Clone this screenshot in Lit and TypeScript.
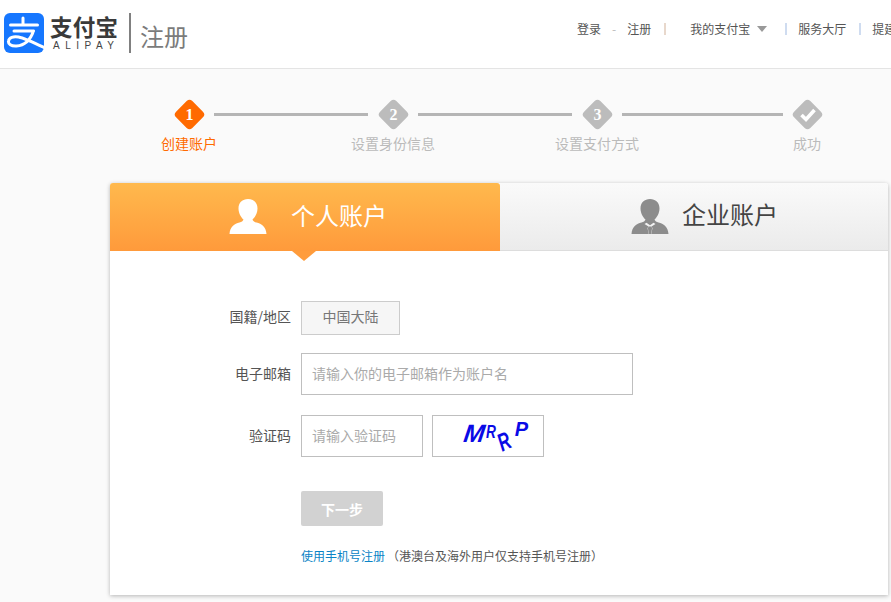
import { LitElement, html, css, svg } from "lit";
import { customElement } from "lit/decorators.js";

@customElement("app-root")
export class AppRoot extends LitElement {
  static styles = css`
    :host {
      display: block;
      width: 891px;
      height: 602px;
      overflow: hidden;
      background: #fafafa;
      font-family: "Noto Sans CJK SC", "Liberation Sans", sans-serif;
      color: #555;
    }
    .header {
      height: 68px;
      background: #fff;
      border-bottom: 1px solid #e4e4e4;
      display: flex;
      align-items: center;
      padding-left: 4px;
      white-space: nowrap;
    }
    .mark { width: 40px; height: 40px; flex: none; margin-top: -2px; }
    .wordmark { margin-left: 6px; width: 68px; display: flex; flex-direction: column; margin-top: -3px; }
    .wordmark b { font-size: 22.5px; line-height: 25px; color: #3a3a3a; font-weight: 700; letter-spacing: 0.2px; }
    .wordmark span {
      font-family: "Liberation Sans", sans-serif;
      font-size: 10px; line-height: 11px; letter-spacing: 5.5px; color: #444; margin: 1px 0 0 3px;
    }
    .vbar { width: 2px; height: 40px; background: #808080; margin-left: 11px; margin-top: -2px; flex: none; }
    .page-name { font-size: 24px; color: #7b7b7b; margin-left: 9px; line-height: 30px; margin-top: 4px; }
    .nav {
      margin-left: auto;
      width: 314px;
      flex: none;
      display: flex;
      align-items: center;
      font-size: 12px;
      color: #555;
      margin-top: -11px;
      overflow: hidden;
    }
    .nav .dash { color: #bbb; margin: 0 11px; width: 5px; text-align: center; }
    .nav .sep { width: 2px; height: 12px; flex: none; }
    .nav .sep.warm { background: #e8d8cc; margin: 0 24px 0 13px; }
    .nav .sep.cool { background: #cfdcf0; margin: 0 11px 0 13px; }
    .nav .sep.first { margin-left: 18px; }
    .caret {
      width: 0; height: 0; margin-left: 7px; flex: none;
      border-left: 5px solid transparent; border-right: 5px solid transparent; border-top: 6px solid #999;
    }
    .steps { padding: 31px 0 0 175px; height: 114px; box-sizing: border-box; }
    .track { display: flex; align-items: center; height: 29px; }
    .dia { width: 29px; height: 29px; flex: none; display: flex; align-items: center; justify-content: center; position: relative; }
    .dia::before {
      content: ""; position: absolute; left: 3px; top: 3px; width: 23px; height: 23px;
      background: #bcbcbc; border-radius: 4px; transform: rotate(45deg);
    }
    .dia.on::before { background: #ff6a00; }
    .dia span {
      position: relative; color: #fff; font: 700 16px/1 "Liberation Serif", serif;
    }
    .dia svg { position: relative; width: 18px; height: 16px; }
    .line { height: 3px; background: #b5b5b5; flex: none; }
    .line.a { width: 154px; margin: 0 11px 0 10px; }
    .line.b { width: 154px; margin: 0 11px 0 10px; }
    .line.c { width: 161px; margin: 0 10px; }
    .labels { display: flex; margin: 4px 0 0 -36px; font-size: 14px; line-height: 20px; color: #bbb; }
    .labels div { width: 100px; text-align: center; flex: none; }
    .labels .on { color: #ff6a00; }
    .labels .g1 { margin-left: 104px; }
    .labels .g2 { margin-left: 110px; }
    .card {
      margin-left: 110px;
      width: 778px;
      height: 412px;
      background: #fff;
      border-radius: 3px 3px 0 0;
      box-shadow: 0 1px 4px rgba(0,0,0,.28);
    }
    .tabs { display: flex; height: 68px; position: relative; }
    .tab { display: flex; align-items: center; font-size: 24px; box-sizing: border-box; }
    .tab svg { width: 38px; height: 36px; flex: none; }
    .tab span { margin-bottom: 6px; }
    .tab.me {
      width: 390px; padding-left: 119px; gap: 24px; color: #fff;
      background: linear-gradient(#ffb94d, #ff9a3b);
      border-radius: 3px 3px 0 0;
      position: relative;
    }
    .tab.me::after {
      content: ""; position: absolute; left: 182px; top: 68px; width: 0; height: 0;
      border-left: 12px solid transparent; border-right: 12px solid transparent; border-top: 10px solid #ff9c3c;
    }
    .tab.co {
      width: 388px; padding-left: 131px; gap: 13px; color: #444;
      background: linear-gradient(#fafafa, #ebebeb);
      border-bottom: 1px solid #ddd;
      border-radius: 0 3px 0 0;
    }
    .form { padding-top: 50px; }
    .row { display: flex; align-items: center; }
    .row + .row { margin-top: 18px; }
    .row.r3 { margin-top: 20px; }
    .lbl { width: 181px; text-align: right; margin-right: 10px; padding-bottom: 2px; font-size: 14px; color: #555; flex: none; }
    .lbl.top { padding-bottom: 4px; }
    .box {
      box-sizing: border-box; border: 1px solid #bfbfbf; background: #fff;
      height: 42px; display: flex; align-items: center; padding: 0 0 2px 10px;
      font-size: 14px; color: #aaa; flex: none;
    }
    .box.static { width: 99px; height: 34px; justify-content: center; padding: 0 0 4px; background: #f6f6f6; border-color: #ccc; color: #777; }
    .box.email { width: 332px; }
    .box.code { width: 122px; }
    .box.captcha { width: 112px; margin-left: 9px; padding: 0 0 0 31px; align-items: flex-start; overflow: hidden; }
    .captcha span {
      display: inline-block; color: #0a0ae6; font: italic 700 20px/1 "Liberation Sans", sans-serif;
    }
    .captcha .m { margin-top: 5px; font-size: 25px; transform: skewX(-8deg); }
    .captcha .r1 { margin: 6px 0 0 1px; font-size: 19px; transform: scaleX(.72); transform-origin: left top; }
    .captcha .r2 { margin: 13px 0 0 -5px; font-size: 25px; transform: rotate(-25deg) scaleX(.66); }
    .captcha .p { margin: 3px 0 0 2px; font-size: 20px; }
    .next {
      margin: 34px 0 0 191px; width: 82px; height: 35px; border-radius: 2px; background: #d2d2d2;
      color: #fff; font-size: 14px; font-weight: 700; display: flex; align-items: center; justify-content: center;
    }
    .foot { margin: 21px 0 0 191px; font-size: 12px; line-height: 18px; color: #555; white-space: nowrap; }
    .foot a { color: #0a84c6; text-decoration: none; margin-right: 2px; }
  `;

  private person() {
    return svg`<svg viewBox="0 0 38 36" aria-hidden="true">
      <path fill="#fff" d="M19 0c5.500 0 9.500 3.500 9.500 9.500 0 4.500-2.500 9-5 11 .5 1.500 2 2.500 4 3 5 1.200 9.500 4 10 11.500H.5c.5-7.500 5-10.300 10-11.500 2-.5 3.500-1.500 4-3-2.500-2-5-6.500-5-11C9.500 3.500 13.500 0 19 0z"/>
    </svg>`;
  }

  private business() {
    return svg`<svg viewBox="0 0 38 36" aria-hidden="true">
      <path fill="#8c8c8c" d="M19 0c5.500 0 9.500 3.500 9.500 9.500 0 4.500-2.500 9-5 11 .5 1.500 2 2.500 4 3 5 1.200 9.500 4 10 11.500H.5c.5-7.500 5-10.300 10-11.500 2-.5 3.500-1.500 4-3-2.500-2-5-6.500-5-11C9.500 3.500 13.500 0 19 0z"/>
      <path fill="#f2f2f2" d="M13.500 25l4 2.500-1 1.500 1.200 6h2.600l1.200-6-1-1.500 4-2.500-2-1.200-3.500 2.500-3.500-2.500z"/>
      <path fill="#8c8c8c" d="M17.600 27.500h2.800l.7 1.500-.9 6h-2.400l-.9-6z"/>
    </svg>`;
  }

  render() {
    return html`
      <div class="header">
        <svg class="mark" viewBox="0 0 40 40" aria-hidden="true">
          <rect width="40" height="40" rx="6" fill="#1677ff"/>
          <path fill="none" stroke="#fff" stroke-width="3" stroke-linecap="round" d="M19 5v7M6.500 12h27M10 18h19.500M29.500 18c-3 8.500-9 14.500-17 15-5.500.300-8.500-2-8-5 .500-3.500 5-5 10-4 6 1.200 14 5 25.500 10.500"/>
        </svg>
        <div class="wordmark"><b>支付宝</b><span>ALIPAY</span></div>
        <div class="vbar"></div>
        <div class="page-name">注册</div>
        <nav class="nav">
          <span>登录</span><span class="dash">-</span><span>注册</span>
          <i class="sep warm"></i>
          <span>我的支付宝</span><i class="caret"></i>
          <i class="sep cool first"></i>
          <span>服务大厅</span>
          <i class="sep cool"></i>
          <span>提建议</span>
        </nav>
      </div>

      <div class="steps">
        <div class="track">
          <div class="dia on"><span>1</span></div><div class="line a"></div>
          <div class="dia"><span>2</span></div><div class="line b"></div>
          <div class="dia"><span>3</span></div><div class="line c"></div>
          <div class="dia">
            <svg viewBox="0 0 18 16" aria-hidden="true"><path fill="none" stroke="#fff" stroke-width="3.600" d="M2.500 8l4.500 4.500L15.500 3"/></svg>
          </div>
        </div>
        <div class="labels">
          <div class="on">创建账户</div>
          <div class="g1">设置身份信息</div>
          <div class="g1">设置支付方式</div>
          <div class="g2">成功</div>
        </div>
      </div>

      <div class="card">
        <div class="tabs">
          <div class="tab me">${this.person()}<span>个人账户</span></div>
          <div class="tab co">${this.business()}<span>企业账户</span></div>
        </div>
        <div class="form">
          <div class="row">
            <div class="lbl top">国籍/地区</div>
            <div class="box static">中国大陆</div>
          </div>
          <div class="row">
            <div class="lbl">电子邮箱</div>
            <div class="box email">请输入你的电子邮箱作为账户名</div>
          </div>
          <div class="row r3">
            <div class="lbl">验证码</div>
            <div class="box code">请输入验证码</div>
            <div class="box captcha"><span class="m">M</span><span class="r1">R</span><span class="r2">R</span><span class="p">P</span></div>
          </div>
          <div class="next">下一步</div>
          <div class="foot"><a>使用手机号注册</a>（港澳台及海外用户仅支持手机号注册）</div>
        </div>
      </div>
    `;
  }
}
